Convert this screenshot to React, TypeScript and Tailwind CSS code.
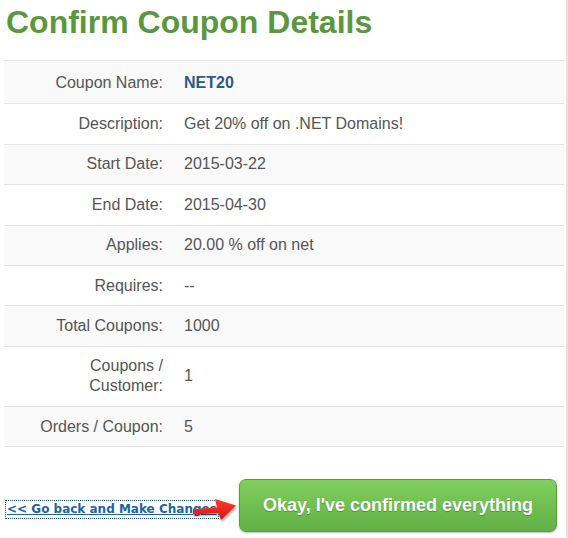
import React from "react";

const rows: { label: React.ReactNode; value: React.ReactNode; lh?: string }[] = [
  { label: "Coupon Name:", value: <span className="font-bold text-[16px] text-[#2b5a8a]">NET20</span>, lh: "leading-[23px]" },
  { label: "Description:", value: "Get 20% off on .NET Domains!" },
  { label: "Start Date:", value: "2015-03-22" },
  { label: "End Date:", value: "2015-04-30" },
  { label: "Applies:", value: "20.00 % off on net" },
  { label: "Requires:", value: "--" },
  { label: "Total Coupons:", value: "1000" },
  { label: "Coupons / Customer:", value: "1" },
  { label: "Orders / Coupon:", value: "5" },
];

export default function App() {
  return (
    <div className="w-[568px] h-[538px] border-r-2 border-[#e2e2e2] bg-white font-['Liberation_Sans',Arial,sans-serif]">
      <div className="pl-1 w-[564px]">
        <h1 className="pt-1 pl-[2px] text-[32px] leading-[36px] font-bold text-[#5a983f]">Confirm Coupon Details</h1>
        <div className="mt-5 border-t border-[#e3e3e3]">
          {rows.map((r, i) => (
            <div
              key={i}
              className={`grid grid-cols-[160px_1fr] items-center border-b border-[#e3e3e3] text-[16px] ${r.lh ?? "leading-[20px]"} text-[#555] ${i % 2 === 0 ? "bg-[#f9f9f9]" : "bg-white"}`}
            >
              <div className="py-[9.7px] pl-[26px] pr-[1px] text-right">{r.label}</div>
              <div className="py-[9.7px] pl-[20px]">{r.value}</div>
            </div>
          ))}
        </div>
        <div className="relative mt-[32px] flex items-center justify-between pl-[3px] pr-[7px]">
          <a
            href="#"
            className="mt-[7px] font-['DejaVu_Sans',Verdana,sans-serif] text-[12px] leading-[15px] font-bold text-[#1b63ac] underline outline-1 outline-dotted outline-[#1b4f8a] outline-offset-[1px]"
          >
            &lt;&lt; Go back and Make Changes
          </a>
          <button className="w-[318px] h-[53px] rounded-[7px] border border-[#5b9a3c] bg-gradient-to-b from-[#80cf5d] to-[#62b046] text-white font-bold text-[18px] shadow-[0_1px_2px_rgba(0,0,0,0.25)] [text-shadow:0_1px_1px_rgba(0,0,0,0.25)]">
            Okay, I've confirmed everything
          </button>
          <svg
            className="absolute left-[184px] top-[16px]"
            width="54"
            height="32"
            viewBox="0 0 54 32"
          >
            <defs>
              <linearGradient id="ar" x1="0" y1="0" x2="0" y2="1">
                <stop offset="0" stopColor="#ff3b2f" />
                <stop offset="1" stopColor="#d8140c" />
              </linearGradient>
              <filter id="sh" x="-20%" y="-20%" width="140%" height="160%">
                <feDropShadow dx="1" dy="2" stdDeviation="1.2" floodColor="#000" floodOpacity="0.35" />
              </filter>
            </defs>
            <polygon
              filter="url(#sh)"
              fill="url(#ar)"
              points="5,14 29,12.5 27,4 48,10.5 33,25 30.5,18 5,19.5"
            />
          </svg>
        </div>
      </div>
    </div>
  );
}
